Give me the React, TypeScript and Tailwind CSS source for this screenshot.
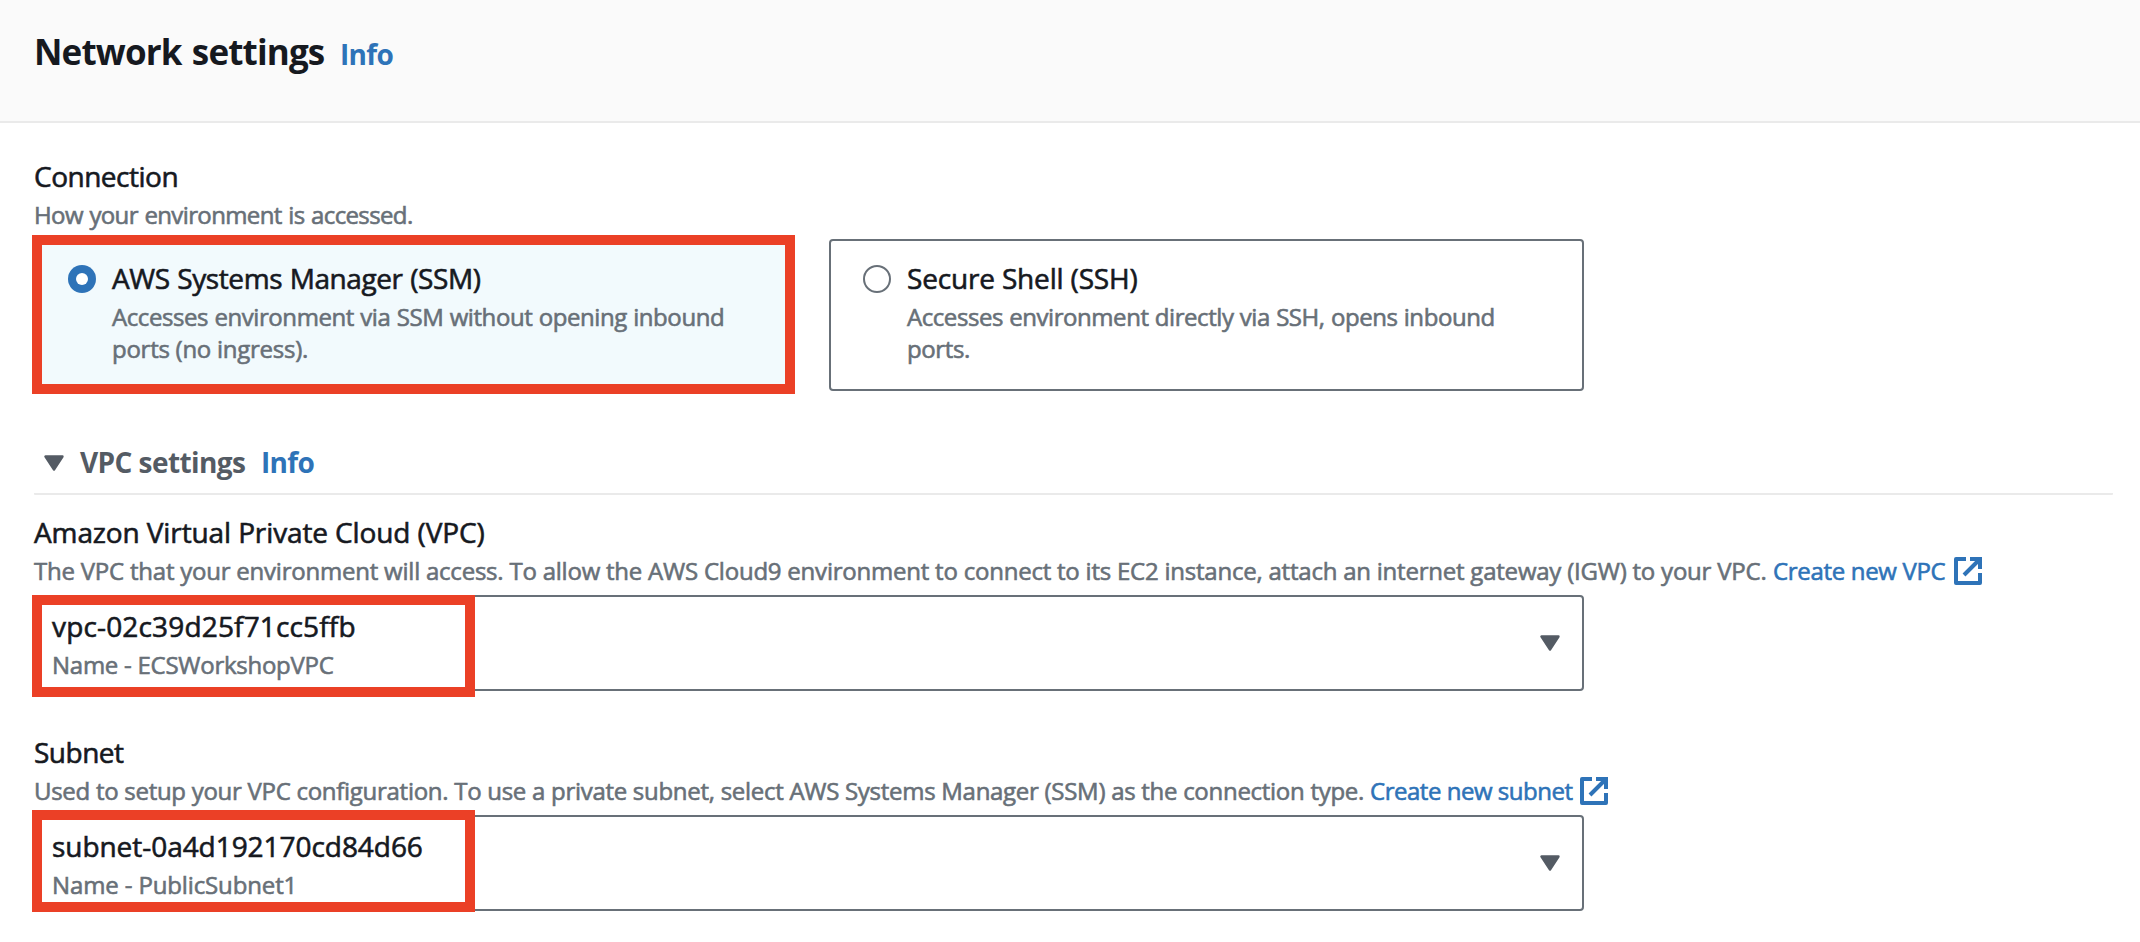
import type { ReactNode } from "react";

function Caret() {
  return (
    <svg className="h-4 w-5 shrink-0" viewBox="0 0 20 16">
      <path d="M1.5 1.5h17L10 14.5z" fill="#545b64" stroke="#545b64" strokeWidth="2.4" strokeLinejoin="round" />
    </svg>
  );
}

function ExternalIcon() {
  return (
    <svg className="size-7 shrink-0" viewBox="0 0 28 28" fill="none" stroke="#2e73b8" strokeWidth="4">
      <path d="M12 2H2v24h24V16" strokeLinejoin="round" />
      <path d="M16 2h10v10M26 2L10 18" />
    </svg>
  );
}

function Radio({ checked }: { checked?: boolean }) {
  return checked ? (
    <span className="mt-[7px] flex size-7 shrink-0 items-center justify-center rounded-full bg-[#2e73b8]">
      <span className="size-3 rounded-full bg-white" />
    </span>
  ) : (
    <span className="mt-[7px] size-7 shrink-0 rounded-full border-2 border-[#687078] bg-white" />
  );
}

function Highlight({ className }: { className: string }) {
  return <div className={`pointer-events-none absolute border-10 border-[#eb4026] ${className}`} />;
}

function Tile({ checked, title, children }: { checked?: boolean; title: ReactNode; children: ReactNode }) {
  return (
    <div
      className={`flex h-[152px] w-[755px] gap-4 rounded-sm border-2 pt-[17px] pl-8 ${
        checked ? "border-[#2e73b8] bg-[#f2fafd]" : "border-[#687078] bg-white"
      }`}
    >
      <Radio checked={checked} />
      <div className="whitespace-nowrap">
        <div className="text-[28px] leading-10">{title}</div>
        <div className="mt-[3px] text-[24px] leading-8 text-[#687078]">{children}</div>
      </div>
    </div>
  );
}

function Select({ value, name }: { value: ReactNode; name: ReactNode }) {
  return (
    <div className="flex h-24 w-[1550px] items-center justify-between rounded-sm border-2 border-[#687078] bg-white pr-[22px] pl-4">
      <div className="h-full pt-[9px] whitespace-nowrap">
        <div className="text-[28px] leading-10">{value}</div>
        <div className="mt-[3px] text-[24px] leading-8 text-[#687078]">{name}</div>
      </div>
      <Caret />
    </div>
  );
}

export default function App() {
  return (
    <div className="h-[942px] w-[2140px] overflow-hidden bg-white font-['Open_Sans','Noto_Sans',sans-serif] text-[#16191f] [-webkit-text-stroke:0.6px_currentColor]">
      <header className="flex h-[123px] items-baseline border-b-2 border-[#eaeaea] bg-[#fafafa] pt-[30px] pl-[34px] [-webkit-text-stroke:0px]">
        <h1 className="w-[306px] text-[35px] leading-11 font-bold tracking-[-0.85px] whitespace-nowrap [word-spacing:2px]">Network settings</h1>
        <a className="text-[28px] font-bold tracking-[-0.67px] text-[#2e73b8]">Info</a>
      </header>

      <main className="pt-[33px] pl-[34px] whitespace-nowrap">
        <section>
          <div className="text-[28px] leading-10 tracking-[-0.49px]">Connection</div>
          <div className="mt-[3px] text-[24px] leading-8 tracking-[-0.62px] text-[#687078] [word-spacing:0.9px]">How your environment is accessed.</div>
          <div className="relative mt-2 flex gap-10">
            <Tile checked title={<span className="tracking-[-0.42px] [word-spacing:0.8px]">AWS Systems Manager (SSM)</span>}>
              <p className="tracking-[-0.42px] [word-spacing:0.5px]">Accesses environment via SSM without opening inbound</p>
              <p className="tracking-[-0.26px]">ports (no ingress).</p>
            </Tile>
            <Tile title={<span className="tracking-[-0.17px]">Secure Shell (SSH)</span>}>
              <p className="tracking-[-0.44px] [word-spacing:0.5px]">Accesses environment directly via SSH, opens inbound</p>
              <p className="tracking-[-0.38px]">ports.</p>
            </Tile>
            <Highlight className="-top-1 -left-0.5 h-[159px] w-[763px]" />
          </div>
        </section>

        <section className="mt-[51px]">
          <div className="flex h-[53px] w-[2079px] items-start rounded-[1px] border-b-2 border-[#eaeaea] pl-2.5 text-[28px] leading-10 font-bold [-webkit-text-stroke:0px]">
            <span className="mt-[13px] flex">
              <Caret />
            </span>
            <h2 className="ml-4 w-[181px] tracking-[-0.58px] text-[#545b64]">VPC settings</h2>
            <a className="tracking-[-0.67px] text-[#2e73b8]">Info</a>
          </div>

          <div className="mt-[17px] text-[28px] leading-10 tracking-[-0.115px]">Amazon Virtual Private Cloud (VPC)</div>
          <div className="mt-[3px] flex h-8 text-[24px] leading-8 text-[#687078]">
            <p className="w-[1739px] tracking-[-0.223px]">
              The VPC that your environment will access. To allow the AWS Cloud9 environment to connect to its EC2 instance, attach an
              internet gateway (IGW) to your VPC.
            </p>
            <a className="flex w-[181px] tracking-[-0.32px] text-[#2e73b8]">Create new VPC</a>
            <span className="mt-0.5">
              <ExternalIcon />
            </span>
          </div>
          <div className="relative mt-2">
            <Select
              value={<span className="tracking-[0.16px]">vpc-02c39d25f71cc5ffb</span>}
              name={<span className="tracking-[-0.26px]">Name - ECSWorkshopVPC</span>}
            />
            <Highlight className="top-0 -left-0.5 h-[102px] w-[443px]" />
          </div>
        </section>

        <section className="mt-[41px]">
          <div className="text-[28px] leading-10 tracking-[-0.5px]">Subnet</div>
          <div className="mt-[3px] flex h-8 text-[24px] leading-8 text-[#687078]">
            <p className="w-[1336px] tracking-[-0.283px]">
              Used to setup your VPC configuration. To use a private subnet, select AWS Systems Manager (SSM) as the connection type.
            </p>
            <a className="flex w-[210px] tracking-[-0.475px] text-[#2e73b8]">Create new subnet</a>
            <span className="mt-0.5">
              <ExternalIcon />
            </span>
          </div>
          <div className="relative mt-2">
            <Select
              value={<span className="tracking-[-0.05px]">subnet-0a4d192170cd84d66</span>}
              name={<span className="tracking-[-0.13px]">Name - PublicSubnet1</span>}
            />
            <Highlight className="-top-[5px] -left-0.5 h-[102px] w-[443px]" />
          </div>
        </section>
      </main>
    </div>
  );
}
